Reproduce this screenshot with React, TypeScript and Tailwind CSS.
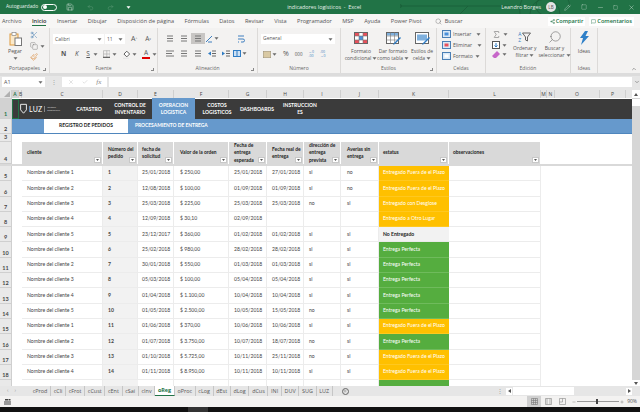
import React from "react";
import { Scissors, Copy, Paintbrush, Search, Share2, MessageSquare, Sigma, Pencil, X, Check, ChevronDown, ChevronUp, Plus, Minus, Save, Undo2, Redo2, Square } from "lucide-react";

const GRID = "grid grid-cols-[12px_7px_3px_81px_35px_36px_55px_38px_37px_37px_38px_70px_92px_6px_8px_45px_26px_6px]";

function Caret({ className = "" }: { className?: string }) {
  return (
    <svg width="5" height="3" viewBox="0 0 5 3" className={"shrink-0 " + className}>
      <path d="M0.5 0.3h4L2.5 2.7z" fill="#6a6a6a" />
    </svg>
  );
}

function RibbonGroup({ w, label, children, launcher }: { w: string; label: string; children: React.ReactNode; launcher?: boolean }) {
  return (
    <div className={w + " relative shrink-0 h-full flex flex-col border-r border-[#dcdad8]"}>
      <div className="flex-1 min-h-0">{children}</div>
      <div className="h-[8px] leading-[8px] text-center text-[5px] text-[#666] mb-[1px]">{label}</div>
      {launcher && <div className="absolute right-[3px] bottom-[2px] w-[3px] h-[3px] border-r border-b border-[#888]" />}
    </div>
  );
}

function Bars({ x = [0, 0, 0], color = "#777" }: { x?: number[]; color?: string }) {
  return (
    <svg width="8" height="7" viewBox="0 0 8 7">
      {[1, 3.5, 6].map((y, i) => (
        <line key={y} x1={x[i]} x2={8 - (x[i] === 0 ? (i === 1 ? 2 : 0) : x[i])} y1={y} y2={y} stroke={color} strokeWidth="1" />
      ))}
    </svg>
  );
}

function IconSlot({ w = "w-[14px]", children, active }: { w?: string; children: React.ReactNode; active?: boolean }) {
  return <div className={w + " h-[11px] flex items-center justify-center gap-[1px] shrink-0 " + (active ? "bg-[#c8c6c4]" : "")}>{children}</div>;
}

function CondIcon() {
  return (
    <svg width="14" height="12" viewBox="0 0 14 12">
      <rect x="0.5" y="0.5" width="13" height="11" fill="#fff" stroke="#666" />
      <rect x="1" y="1" width="4" height="3" fill="#e8505b" />
      <rect x="9" y="1" width="4" height="3" fill="#e8505b" />
      <rect x="5" y="4" width="4" height="4" fill="#4a90d9" />
      <rect x="1" y="8" width="4" height="3" fill="#e8505b" />
      <rect x="9" y="8" width="4" height="3" fill="#e8505b" />
      <path d="M0 4h14M0 8h14M5 0v12M9 0v12" stroke="#777" strokeWidth=".6" />
    </svg>
  );
}
function TableIcon() {
  return (
    <svg width="15" height="13" viewBox="0 0 15 13">
      <rect x="0.5" y="0.5" width="12" height="11" fill="#fff" stroke="#666" />
      <rect x="1" y="1" width="11" height="2.5" fill="#7fb0dd" />
      <path d="M0 4h13M0 8h13M4.5 0v12M8.5 0v12" stroke="#777" strokeWidth=".6" />
      <path d="M14 5 8 11l-1 2 2-1 6-6z" fill="#2f7cc4" />
    </svg>
  );
}
function StyleIcon() {
  return (
    <svg width="15" height="13" viewBox="0 0 15 13">
      <rect x="0.5" y="0.5" width="13" height="11" fill="#fff" stroke="#666" />
      <rect x="2" y="2.5" width="10" height="6" fill="#7fb0dd" />
      <path d="M14 5 8 11l-1 2 2-1 6-6z" fill="#2f7cc4" />
    </svg>
  );
}
function CellIcon({ tone }: { tone: string }) {
  return (
    <svg width="9" height="8" viewBox="0 0 9 8">
      <rect x="0.5" y="0.5" width="8" height="7" fill="#dbe9f6" stroke="#4a7fb5" />
      <rect x="2.5" y="2.5" width="4" height="3" fill={tone} />
    </svg>
  );
}

function FilterBtn() {
  return (
    <div className="absolute right-[1px] bottom-[1px] w-[7px] h-[6px] bg-white border border-[#c8c8c8] flex items-center justify-center">
      <svg width="3" height="2" viewBox="0 0 3 2"><path d="M0 0h3L1.5 2z" fill="#555" /></svg>
    </div>
  );
}

function HeadCell({ children, cls = "" }: { children: React.ReactNode; cls?: string }) {
  return (
    <div className={"relative bg-[#d9d9d9] border-r border-white flex items-center font-bold text-[4.9px] leading-[7.4px] text-[#222] " + cls}>
      <div>{children}</div>
      <FilterBtn />
    </div>
  );
}

const F = "Entregado Fuera de el Plazo";
const P = "Entrega Perfecta";
const rows: [number, string, string, string, string, string, string, string, string, string][] = [
  [5, "Nombre del cliente 1", "1", "25/01/2018", "$ 250,00", "25/01/2018", "27/01/2018", "si", "no", F],
  [6, "Nombre del cliente 2", "2", "12/08/2018", "$ 100,00", "01/09/2018", "01/09/2018", "si", "no", F],
  [7, "Nombre del cliente 3", "3", "25/03/2018", "$ 225,00", "25/03/2018", "25/03/2018", "no", "si", "Entregado con Desglose"],
  [8, "Nombre del cliente 4", "4", "12/09/2018", "$ 30,10", "02/09/2018", "", "", "", "Entregado a Otro Lugar"],
  [9, "Nombre del cliente 5", "5", "23/12/2017", "$ 360,00", "01/02/2018", "01/02/2018", "si", "si", "No Entregado"],
  [10, "Nombre del cliente 1", "6", "25/02/2018", "$ 980,00", "28/02/2018", "28/02/2018", "si", "si", P],
  [11, "Nombre del cliente 2", "7", "30/01/2018", "$ 550,00", "01/03/2018", "01/03/2018", "si", "si", P],
  [12, "Nombre del cliente 3", "8", "05/03/2018", "$ 100,00", "05/04/2018", "05/04/2018", "si", "si", P],
  [13, "Nombre del cliente 4", "9", "01/04/2018", "$ 1.100,00", "10/04/2018", "10/04/2018", "si", "si", P],
  [14, "Nombre del cliente 5", "10", "01/05/2018", "$ 2.500,00", "10/05/2018", "15/05/2018", "no", "si", P],
  [15, "Nombre del cliente 1", "11", "01/06/2018", "$ 370,00", "10/06/2018", "10/06/2018", "si", "si", F],
  [16, "Nombre del cliente 2", "12", "01/07/2018", "$ 3.750,00", "10/07/2018", "18/07/2018", "no", "si", P],
  [17, "Nombre del cliente 3", "13", "01/10/2018", "$ 5.725,00", "10/11/2018", "25/11/2018", "no", "si", F],
  [18, "Nombre del cliente 4", "14", "01/11/2018", "$ 8.950,00", "10/11/2018", "10/11/2018", "si", "si", F],
];

function statusCls(s: string) {
  if (s === P) return "bg-[#55ad3f] text-white border-b border-[#6fbb5c]";
  if (s === "No Entregado") return "bg-[#f2f2f2] text-[#222] font-bold border-b border-[#eaeaea]";
  return "bg-[#ffc000] text-white border-b border-[#ffc81f]";
}

function RowHead({ n, active, cls = "" }: { n: number; active?: boolean; cls?: string }) {
  return (
    <div className={"flex items-end justify-center pb-[1px] border-r border-b border-[#cfcfcf] text-[5.5px] leading-[6px] font-bold w-[12px] shrink-0 " + (active ? "bg-[#d2d2d2] text-[#217346] " : "bg-[#e9e9e9] text-[#444] ") + cls}>
      {n}
    </div>
  );
}

const cols = ["A", "B", "C", "D", "E", "F", "G", "H", "I", "J", "K", "L", "M", "N", "O", "P"];
const tabs = ["Archivo", "Inicio", "Insertar", "Dibujar", "Disposición de página", "Fórmulas", "Datos", "Revisar", "Vista", "Programador", "MSP", "Ayuda", "Power Pivot"];
const sheets = ["cProd", "cCli", "cFrot", "cCust", "cEnt", "cSai", "cInv", "oReg", "oProc", "cLog", "dEst", "dLog", "dCus", "INI", "DUV", "SUG", "LUZ"];

export default function App() {
  return (
    <div className="w-[640px] h-[412px] overflow-hidden flex flex-col bg-white font-['Open_Sans',sans-serif] text-[#555]">
      {/* title bar */}
      <div className="relative h-[14px] bg-[#217346] text-[#e8f1ec] flex items-center text-[5.4px] shrink-0">
        <svg width="220" height="14" viewBox="0 0 220 14" className="absolute right-[20px] top-0" fill="none" stroke="#1b5e39" strokeWidth=".8">
          <path d="M0 6h110M130 14a14 14 0 0 1 30 0M120 14a22 22 0 0 1 50-8M60 14l8-8" />
          <circle cx="0" cy="6" r="1.500" />
          <circle cx="145" cy="6" r="9" />
        </svg>
        <span className="ml-[6px] text-[4.8px] relative">Autoguardado</span>
        <div className="ml-[3px] w-[16px] h-[7px] rounded-full border border-white flex items-center pl-[1px]"><div className="w-[4px] h-[4px] rounded-full bg-white" /></div>
        <Save size={8} strokeWidth={1.3} className="ml-[9px]" />
        <Undo2 size={7} strokeWidth={1.2} className="ml-[13px] opacity-40" />
        <Redo2 size={7} strokeWidth={1.2} className="ml-[13px] opacity-40" />
        <Caret className="ml-[12px] brightness-[4]" />
        <span className="ml-[156px] whitespace-pre relative">indicadores logísticos  -  Excel</span>
        <span className="ml-auto mr-[5px] relative">Leandro Borges</span>
        <div className="relative w-[10px] h-[10px] rounded-full bg-[#e4e4e4] text-[#555] text-[4.5px] flex items-center justify-center">LB</div>
        <Pencil size={7} strokeWidth={1.2} className="ml-[8px]" />
        <Square size={6} strokeWidth={1.2} className="ml-[10px]" />
        <Minus size={7} strokeWidth={1.2} className="ml-[10px]" />
        <Square size={5} strokeWidth={1.3} className="ml-[9px]" />
        <X size={7} strokeWidth={1.3} className="ml-[10px] mr-[5px]" />
      </div>
      {/* tabs */}
      <div className="h-[14px] bg-[#f7f6f5] flex items-center text-[5.6px] pl-[2px] shrink-0">
        <div className="flex gap-[10.4px]">
          {tabs.map((t) => (
            <span key={t} className={t === "Inicio" ? "relative text-[#333] font-semibold after:absolute after:left-0 after:right-0 after:bottom-[-1px] after:h-[1px] after:bg-[#217346]" : ""}>{t}</span>
          ))}
        </div>
        <Search size={7} strokeWidth={1.2} className="ml-[13px]" />
        <span className="ml-[3px]">Buscar</span>
        <div className="ml-auto flex items-center gap-[1px] h-[9px] px-[2px] bg-white text-[#217346] font-semibold">
          <Share2 size={5} />Compartir
        </div>
        <div className="ml-[4px] mr-[6px] flex items-center gap-[1px] h-[9px] px-[2px] bg-white text-[#217346] font-semibold">
          <MessageSquare size={5} />Comentarios
        </div>
      </div>
      {/* ribbon */}
      <div className="h-[45px] bg-[#f3f2f1] flex text-[5.2px] shrink-0 relative">
        <RibbonGroup w="w-[50px]" label="Portapapeles" launcher>
          <div className="flex pt-[3px]">
            <div className="w-[30px] flex flex-col items-center pt-[1px]">
              <svg width="13" height="14" viewBox="0 0 13 14"><rect x="1" y="2" width="8" height="11" fill="#fbe9c9" stroke="#e09a3c" /><rect x="3" y="0.5" width="4" height="3" fill="#fff" stroke="#888" strokeWidth=".7" /><rect x="6" y="6" width="6.5" height="7.5" fill="#fff" stroke="#777" /></svg>
              <span className="mt-[2px] leading-[7px]">Pegar</span>
              <Caret className="mt-[2px]" />
            </div>
            <div className="flex flex-col gap-[3px]">
              <Scissors size={8} color="#2f6fa8" strokeWidth={1.3} />
              <div className="flex items-center gap-[2px]"><Copy size={8} color="#666" strokeWidth={1.2} /><Caret /></div>
              <Paintbrush size={8} color="#d9893a" strokeWidth={1.5} />
            </div>
          </div>
        </RibbonGroup>
        <RibbonGroup w="w-[108px]" label="Fuente" launcher>
          <div className="flex items-center pt-[6px] pl-[3px]">
            <div className="w-[51px] h-[10px] bg-white flex items-center justify-between px-[2px] text-[5px]">Calibri<Caret /></div>
            <div className="ml-[1px] w-[20px] h-[10px] bg-white flex items-center justify-between px-[2px] text-[5px]">11<Caret /></div>
            <span className="ml-[6px] text-[7px]">A<sup className="text-[3px]">^</sup></span>
            <span className="ml-[8px] text-[6.5px]">A<sup className="text-[3px]">˅</sup></span>
          </div>
          <div className="flex items-center pt-[5px] pl-[7px] h-[14px]">
            <span className="w-[14px] text-center font-bold text-[6.5px]">N</span>
            <span className="w-[14px] text-center italic text-[6.5px]">K</span>
            <span className="w-[10px] text-center underline text-[6.5px]">S</span><Caret />
            <svg width="8" height="8" viewBox="0 0 8 8" className="ml-[5px]"><path d="M.5.5h7v7h-7zM4 .5v7M.5 4h7" fill="none" stroke="#aaa" strokeWidth=".7" /><path d="M0 7.5h8" stroke="#444" /></svg>
            <Caret className="ml-[2px]" />
            <svg width="8" height="9" viewBox="0 0 8 9" className="ml-[6px]"><path d="M4 1 7 4 4 7 1 4z" fill="#fff" stroke="#555" /><path d="M0 8.5h6" stroke="#e2e2e2" /></svg>
            <Caret className="ml-[1px]" />
            <div className="ml-[5px] w-[8px] flex flex-col items-center text-[6.5px] leading-[6px]">A<div className="w-[8px] h-[2px] bg-[#e00000] mt-[1px]" /></div>
            <Caret className="ml-[2px]" />
          </div>
        </RibbonGroup>
        <RibbonGroup w="w-[100px]" label="Alineación" launcher>
          <div className="flex items-center pt-[5px] pl-[5px]">
            <IconSlot><Bars x={[1, 1, 1]} /></IconSlot>
            <IconSlot><Bars x={[1, 1, 1]} /></IconSlot>
            <IconSlot active><Bars x={[1, 1, 1]} /></IconSlot>
            <IconSlot><svg width="8" height="8" viewBox="0 0 8 8"><path d="M1 7 7 1M3 7h4" stroke="#3f7fbf" /></svg><Caret /></IconSlot>
            <div className="w-[15px]" />
            <IconSlot><svg width="8" height="8" viewBox="0 0 8 8"><path d="M1 1h6M1 4h5a1.5 1.5 0 0 1 0 3H4M1 7h1" fill="none" stroke="#3f7fbf" /></svg></IconSlot>
          </div>
          <div className="flex items-center pt-[4px] pl-[5px]">
            <IconSlot><Bars x={[0, 0, 0]} /></IconSlot>
            <IconSlot><Bars x={[1, 1, 1]} /></IconSlot>
            <IconSlot><Bars x={[1, 1, 1]} /></IconSlot>
            <IconSlot><svg width="8" height="7" viewBox="0 0 8 7"><path d="M4 1h4M4 3.5h4M4 6h4" stroke="#666" /><path d="M3 1.500 0 3.500l3 2z" fill="#2f7cc4" /></svg></IconSlot>
            <IconSlot><svg width="8" height="7" viewBox="0 0 8 7"><path d="M4 1h4M4 3.5h4M4 6h4" stroke="#666" /><path d="M0 1.500 3 3.500l-3 2z" fill="#2f7cc4" /></svg></IconSlot>
            <IconSlot><svg width="8" height="7" viewBox="0 0 8 7"><rect x=".5" y=".5" width="7" height="6" fill="#cfe2f5" stroke="#2f7cc4" /><path d="M4 0v7" stroke="#2f7cc4" /></svg><Caret /></IconSlot>
          </div>
        </RibbonGroup>
        <RibbonGroup w="w-[83px]" label="Número">
          <div className="pt-[6px] pl-[3px] pr-[5px]">
            <div className="h-[10px] bg-white flex items-center justify-between px-[2px] text-[5px]">General<Caret /></div>
          </div>
          <div className="flex items-center pt-[5px] pl-[5px] gap-[6px] text-[6px]">
            <div className="flex items-center gap-[1px]"><svg width="8" height="7" viewBox="0 0 8 7"><rect width="8" height="7" fill="#d9c9a3" stroke="#666" strokeWidth=".5" /></svg><Caret /></div>
            <span className="text-[7px]">%</span>
            <span className="text-[4.5px]">000</span>
            <span className="text-[3.5px] leading-[4px] text-[#3f7fbf]">←0<br />.00</span>
            <span className="text-[3.5px] leading-[4px] text-[#3f7fbf]">.00<br />→0</span>
          </div>
        </RibbonGroup>
        <RibbonGroup w="w-[96px]" label="Estilos" launcher>
          <div className="flex pt-[4px] text-center text-[5px] leading-[7px]">
            <div className="ml-[5px] w-[30px] flex flex-col items-center"><CondIcon /><span className="mt-[4px] whitespace-nowrap">Formato</span><span className="flex items-center gap-[1px] whitespace-nowrap">condicional<Caret /></span></div>
            <div className="ml-[2px] w-[30px] flex flex-col items-center"><TableIcon /><span className="mt-[3px] whitespace-nowrap">Dar formato</span><span className="flex items-center gap-[1px] whitespace-nowrap">como tabla<Caret /></span></div>
            <div className="w-[30px] flex flex-col items-center"><StyleIcon /><span className="mt-[3px] whitespace-nowrap">Estilos de</span><span className="flex items-center gap-[1px] whitespace-nowrap">celda<Caret /></span></div>
          </div>
        </RibbonGroup>
        <RibbonGroup w="w-[49px]" label="Celdas">
          <div className="flex flex-col pt-[2px] pl-[5px] gap-[3px] text-[5px] leading-[8px]">
            <div className="flex items-center gap-[2px]"><CellIcon tone="#4a90d9" />Insertar<Caret className="ml-[3px]" /></div>
            <div className="flex items-center gap-[2px]"><CellIcon tone="#e8505b" />Eliminar<Caret className="ml-[3px]" /></div>
            <div className="flex items-center gap-[2px]"><CellIcon tone="#fff" />Formato<Caret /></div>
          </div>
        </RibbonGroup>
        <RibbonGroup w="w-[85px]" label="Edición">
          <div className="flex pt-[2px] pl-[6px]">
            <div className="flex flex-col gap-[2px] w-[18px]">
              <div className="flex items-center gap-[2px]"><Sigma size={9} color="#555" strokeWidth={1.3} /><Caret /></div>
              <div className="flex items-center gap-[2px]"><svg width="8" height="8" viewBox="0 0 8 8"><rect x=".5" y=".5" width="7" height="7" fill="#fff" stroke="#555" /><path d="M4 2v4M2.500 4.500 4 6l1.500-1.500" fill="none" stroke="#2f7cc4" /></svg><Caret /></div>
              <div className="flex items-center gap-[2px]"><svg width="8" height="7" viewBox="0 0 8 7"><path d="M5 0 8 3 4 7H2L0 5z" fill="#c767c9" /></svg><Caret /></div>
            </div>
            <div className="w-[31px] flex flex-col items-center text-[5px] leading-[7px] text-center">
              <div className="flex items-center gap-[1px] h-[14px]"><span className="text-[5px] leading-[6px] text-[#2f7cc4]">A<br />Z</span><svg width="9" height="10" viewBox="0 0 9 10"><path d="M.5 1h8L5.500 5v4l-2-1V5z" fill="none" stroke="#666" /></svg></div>
              <span className="mt-[1px]">Ordenar y</span>
              <span className="flex items-center gap-[1px]">filtrar<Caret /></span>
            </div>
            <div className="ml-[-1px] w-[31px] flex flex-col items-center text-[5px] leading-[7px] text-center">
              <Search size={14} strokeWidth={1} color="#666" className="-scale-x-100" />
              <span className="mt-[1px]">Buscar y</span>
              <span className="flex items-center gap-[1px] whitespace-nowrap">seleccionar<Caret /></span>
            </div>
          </div>
        </RibbonGroup>
        <RibbonGroup w="w-[27px]" label="Ideas">
          <div className="flex flex-col items-center pt-[3px] text-[5px]">
            <svg width="11" height="14" viewBox="0 0 11 14"><path d="M6 0 1 7h3L2 14l8-9H6.500L9 0z" fill="#2f80c8" /></svg>
            <span className="mt-[3px]">Ideas</span>
          </div>
        </RibbonGroup>
        <ChevronUp size={6} className="absolute right-[3px] bottom-[1px]" />
      </div>
      <div className="h-[3px] bg-[#dcdcdc] shrink-0" />
      {/* formula bar */}
      <div className="h-[14px] bg-[#e6e6e6] flex items-start pt-[1px] text-[5.4px] shrink-0">
        <div className="ml-[2px] w-[43px] h-[10px] bg-white flex items-center justify-between px-[2px]">A1<Caret /></div>
        <span className="ml-[6px] mt-[1px] text-[#999] text-[6px]">⋮</span>
        <div className="ml-[5px] w-[46px] h-[10px] bg-white flex items-center justify-around px-[2px] text-[#888]">
          <X size={6} strokeWidth={1} /><Check size={6} strokeWidth={1} /><span className="italic font-['Liberation_Serif',serif] text-[7px]">fx</span>
        </div>
        <div className="ml-[2px] w-[526px] h-[10px] bg-white" />
        <ChevronDown size={6} className="ml-[2px] mt-[2px]" />
      </div>
      {/* sheet */}
      <div className="flex-1 min-h-0 flex">
        <div className="w-[632px] flex flex-col font-['Lato',sans-serif]">
          <div className={GRID + " h-[8px] bg-[#e6e6e6] text-[5px] leading-[8px] text-[#444] font-['Open_Sans',sans-serif] shrink-0"}>
            <div className="relative border-r border-[#cfcfcf]"><svg width="6" height="6" viewBox="0 0 6 6" className="absolute right-[1px] bottom-[1px]"><path d="M6 0v6H0z" fill="#b0b0b0" /></svg></div>
            {cols.map((c) => (
              <div key={c} className={"text-center border-r border-[#cfcfcf] " + (c === "A" ? "bg-[#d2d2d2] text-[#217346] font-semibold" : "")}>{c}</div>
            ))}
            <div />
          </div>
          {/* row 1 nav */}
          <div className="h-[21px] flex shrink-0">
            <RowHead n={1} active />
            <div className="flex-1 bg-[#3b3b3b] mt-[1px] flex text-white font-bold text-[5px] leading-[7px] text-center">
              <div className="w-[7px] border border-[#217346] shrink-0" />
              <div className="w-[41px] flex items-center gap-[2px] pl-[1px] shrink-0">
                <svg width="8" height="12" viewBox="0 0 8 12"><path d="M.7.7h6.600v6.300L4 10.800.7 7z" fill="none" stroke="#fff" /></svg>
                <span className="font-normal text-[7px] tracking-[.2px]">LUZ</span>
                <div className="w-[1px] h-[6px] bg-[#888]" />
                <span className="font-normal text-[2.5px] leading-[3px] text-left text-[#ccc]">Gestión<br />Empresarial</span>
              </div>
              <div className="ml-[7px] w-[44px] self-center shrink-0">CATASTRO</div>
              <div className="w-[38px] self-center shrink-0">CONTROL DE INVENTARIO</div>
              <div className="ml-[3px] w-[43px] bg-[#6699cc] flex items-center justify-center shrink-0 mt-[-1px]">OPERACION LOGISTICA</div>
              <div className="w-[44px] self-center shrink-0">COSTOS LOGISTICOS</div>
              <div className="w-[36px] self-center shrink-0">DASHBOARDS</div>
              <div className="w-[34px] self-center ml-[8px] shrink-0">INSTRUCCION ES</div>
            </div>
          </div>
          {/* row 2 */}
          <div className="h-[15px] flex shrink-0">
            <RowHead n={2} />
            <div className="flex-1 bg-[#6699cc] border-b border-[#4f86bd] flex text-[4.9px] font-bold">
              <div className="ml-[32px] w-[84px] bg-white text-[#222] flex items-center justify-center">REGISTRO DE PEDIDOS</div>
              <div className="ml-[7px] flex items-center text-white">PROCESAMIENTO DE ENTREGA</div>
            </div>
          </div>
          {/* row 3 */}
          <div className="h-[8px] flex shrink-0"><RowHead n={3} /></div>
          {/* row 4 */}
          <div className={GRID + " h-[24px] shrink-0 border-b-2 border-[#d9d9d9]"}>
            <RowHead n={4} />
            <div className="col-span-2" />
            <HeadCell cls="pl-[5px]">cliente</HeadCell>
            <HeadCell cls="pl-[5px]">Número del<br />pedido</HeadCell>
            <HeadCell cls="pl-[4px]">fecha de<br />solicitud</HeadCell>
            <HeadCell cls="pl-[6px]">Valor de la orden</HeadCell>
            <HeadCell cls="pl-[5px]">Fecha de<br />entrega<br />esperada</HeadCell>
            <HeadCell cls="pl-[5px]">Fecha real de<br />entrega</HeadCell>
            <HeadCell cls="pl-[5px]">dirección de<br />entrega<br />prevista</HeadCell>
            <HeadCell cls="pl-[6px]">Averias sin<br />entrega</HeadCell>
            <HeadCell cls="pl-[4px]">estatus</HeadCell>
            <HeadCell cls="pl-[4px]">observaciones</HeadCell>
          </div>
          {rows.map((r) => (
            <div key={r[0]} className={GRID + " h-[15.3px] shrink-0 text-[5.1px] text-[#444]"}>
              <RowHead n={r[0]} />
              <div className="col-span-2" />
              <div className="pl-[5px] flex items-center border-r border-b border-[#ececec]">{r[1]}</div>
              <div className="pl-[5px] flex items-center border-r border-b border-[#ececec] bg-[#f2f2f2] font-bold">{r[2]}</div>
              <div className="pl-[4px] flex items-center border-r border-b border-[#ececec]">{r[3]}</div>
              <div className="pl-[6px] flex items-center border-r border-b border-[#ececec]">{r[4]}</div>
              <div className="pl-[5px] flex items-center border-r border-b border-[#ececec]">{r[5]}</div>
              <div className="pl-[5px] flex items-center border-r border-b border-[#ececec]">{r[6]}</div>
              <div className="pl-[5px] flex items-center border-r border-b border-[#ececec]">{r[7]}</div>
              <div className="pl-[6px] flex items-center border-r border-b border-[#ececec]">{r[8]}</div>
              <div className={"pl-[4px] flex items-center whitespace-nowrap overflow-hidden " + statusCls(r[9])}>{r[9]}</div>
              <div className="border-r border-b border-[#ececec]" />
            </div>
          ))}
          <div className={GRID + " flex-1 min-h-0"}>
            <RowHead n={19} cls="text-transparent" />
            <div className="col-span-2" />
            <div className="border-r border-[#ececec]" />
            <div className="bg-[#f2f2f2]" />
            <div className="border-r border-[#ececec]" />
            <div className="border-r border-[#ececec]" />
            <div className="border-r border-[#ececec]" />
            <div className="border-r border-[#ececec]" />
            <div className="border-r border-[#ececec]" />
            <div className="border-r border-[#ececec]" />
            <div className="bg-[#55ad3f]" />
            <div className="border-r border-[#ececec]" />
          </div>
        </div>
        {/* vertical scrollbar */}
        <div className="w-[8px] bg-[#d6d6d6] flex flex-col">
          <div className="h-[8px] bg-white flex items-center justify-center"><svg width="4" height="3" viewBox="0 0 4 3"><path d="M2 0l2 3H0z" fill="#555" /></svg></div>
          <div className="mt-[1px] h-[7px] bg-white" />
          <div className="mt-auto h-[6px] bg-white flex items-center justify-center"><svg width="4" height="3" viewBox="0 0 4 3"><path d="M2 3l2-3H0z" fill="#555" /></svg></div>
        </div>
      </div>
      {/* sheet tabs */}
      <div className="h-[10px] bg-[#e6e6e6] flex items-center text-[5.4px] shrink-0">
        <span className="ml-[7px] text-[#999] text-[5px]">‹</span>
        <span className="ml-[6px] text-[#999] text-[5px]">›</span>
        <div className="ml-[14px] flex h-full">
          {sheets.map((s) => (
            <div key={s} className={"px-[2.7px] flex items-center border-r border-[#c6c6c6] " + (s === "oReg" ? "bg-white text-[#217346] font-bold border-b border-b-[#217346]" : "")}>{s}</div>
          ))}
        </div>
        <div className="ml-[9px] w-[7px] h-[7px] rounded-full border border-[#666] flex items-center justify-center"><Plus size={4} strokeWidth={2} /></div>
        <span className="ml-auto text-[#999] text-[6px]">⋮</span>
        <div className="ml-[3px] w-[6px] h-[7px] bg-white flex items-center justify-center"><svg width="3" height="4" viewBox="0 0 3 4"><path d="M3 0v4L0 2z" fill="#555" /></svg></div>
        <div className="ml-[1px] w-[61px] h-[8px] bg-white" />
        <div className="w-[52px]" />
        <div className="w-[6px] h-[7px] bg-white flex items-center justify-center"><svg width="3" height="4" viewBox="0 0 3 4"><path d="M0 0v4l3-2z" fill="#555" /></svg></div>
        <div className="w-[8px]" />
      </div>
      {/* status */}
      <div className="h-[11px] bg-[#f3f2f1] flex items-center text-[5px] shrink-0">
        <svg width="7" height="6" viewBox="0 0 7 6" className="ml-[4px]"><rect y="2" width="7" height="4" fill="#999" /><rect x="1" y="0" width="3" height="1.500" fill="#444" /><rect x="4.500" y="0" width="2" height="1.500" fill="#444" /></svg>
        <div className="ml-auto w-[14px] h-full bg-[#d0d0d0] flex items-center justify-center"><svg width="7" height="7" viewBox="0 0 7 7"><path d="M.5.500h6v6h-6zM2.500.500v6M4.500.500v6M.500 2.500h6M.500 4.500h6" fill="none" stroke="#777" strokeWidth=".6" /></svg></div>
        <div className="w-[14px] flex justify-center"><svg width="7" height="7" viewBox="0 0 7 7"><path d="M.5.500h6v6h-6zM2 .500v6M5 .500v6" fill="none" stroke="#888" strokeWidth=".6" /></svg></div>
        <div className="w-[14px] flex justify-center"><svg width="7" height="7" viewBox="0 0 7 7"><path d="M.5.500h6v6h-6zM.500 4h3V.500" fill="none" stroke="#888" strokeWidth=".6" /></svg></div>
        <Minus size={4} className="ml-[3px]" strokeWidth={2} />
        <div className="ml-[1px] w-[42px] h-[1px] bg-[#999] relative"><div className="absolute left-[19px] top-[-2px] w-[2px] h-[5px] bg-[#444]" /></div>
        <Plus size={4} className="ml-[1px]" strokeWidth={2} />
        <span className="ml-[3px] mr-[3px]">90%</span>
      </div>
      <div className="h-[5px] bg-[#111] shrink-0 flex"><div className="ml-[188px] w-[20px] h-full bg-[#333]" /></div>
    </div>
  );
}
